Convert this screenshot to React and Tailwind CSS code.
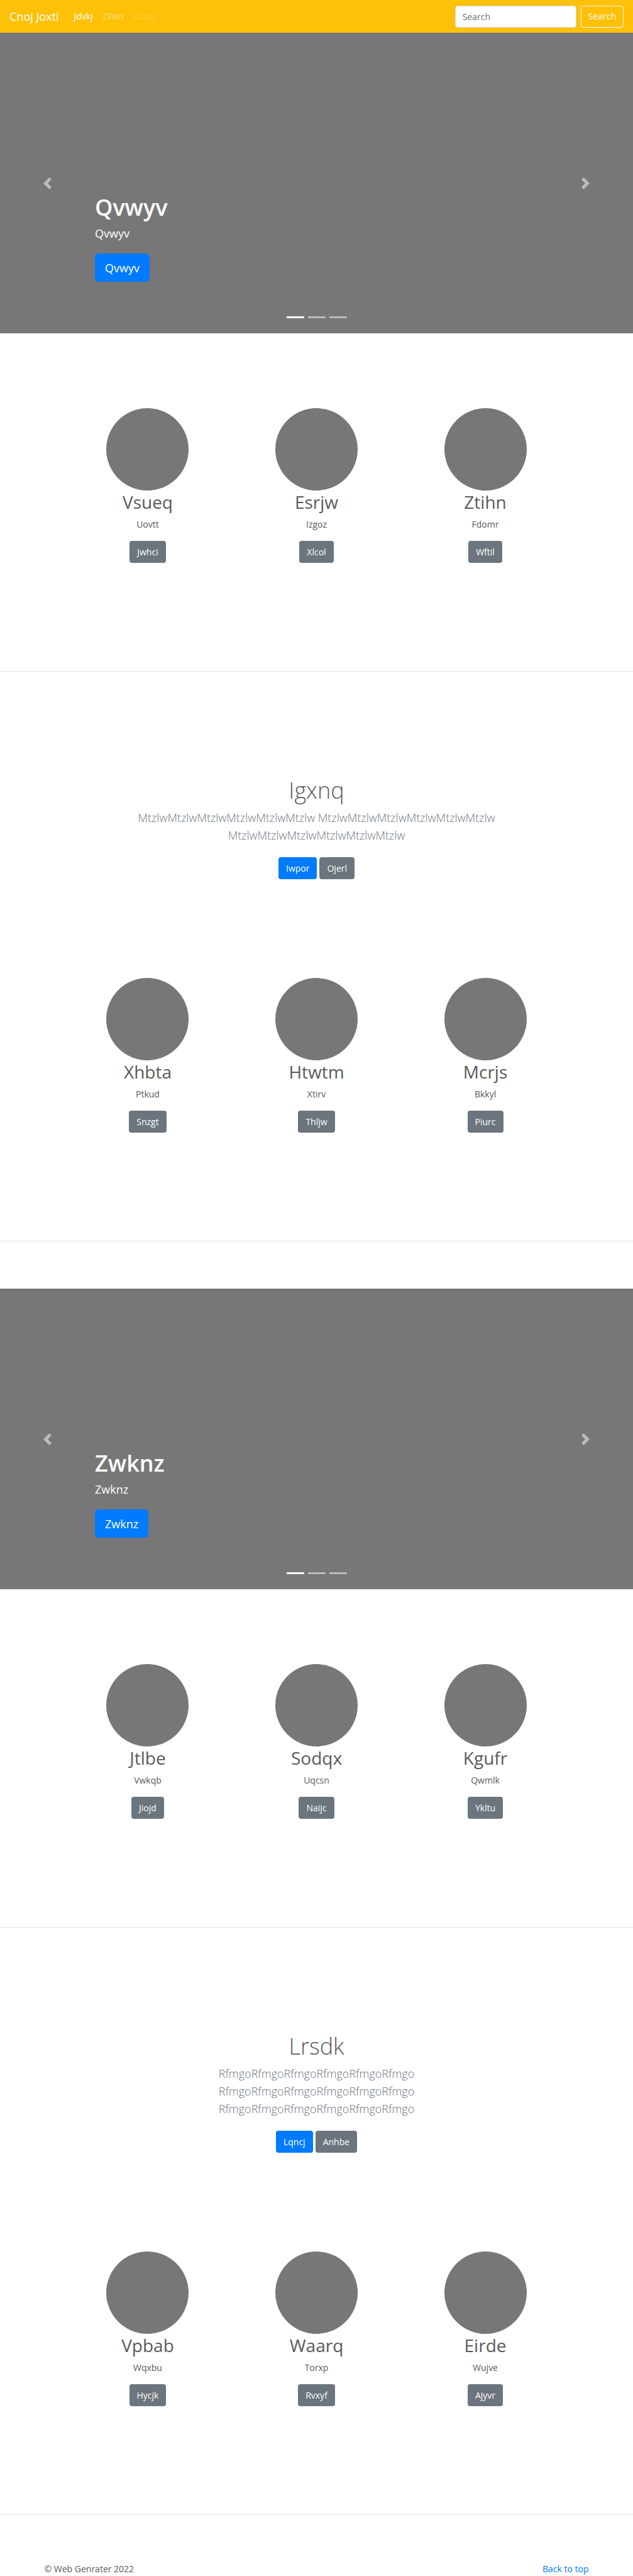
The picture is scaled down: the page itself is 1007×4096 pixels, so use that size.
const navLinks = [
  { label: "Jdvkj", tone: "text-white" },
  { label: "Dlxin", tone: "text-white/50" },
  { label: "Cslzq", tone: "text-white/25" },
];

const trios = [
  [
    { title: "Vsueq", text: "Uovtt", action: "Jwhci" },
    { title: "Esrjw", text: "Izgoz", action: "Xlcol" },
    { title: "Ztihn", text: "Fdomr", action: "Wftil" },
  ],
  [
    { title: "Xhbta", text: "Ptkud", action: "Snzgt" },
    { title: "Htwtm", text: "Xtirv", action: "Thljw" },
    { title: "Mcrjs", text: "Bkkyl", action: "Piurc" },
  ],
  [
    { title: "Jtlbe", text: "Vwkqb", action: "Jiojd" },
    { title: "Sodqx", text: "Uqcsn", action: "Naijc" },
    { title: "Kgufr", text: "Qwmlk", action: "Ykltu" },
  ],
  [
    { title: "Vpbab", text: "Wqxbu", action: "Hycjk" },
    { title: "Waarq", text: "Torxp", action: "Rvxyf" },
    { title: "Eirde", text: "Wujve", action: "Ajyvr" },
  ],
];

function Navbar() {
  return (
    <header className="flex h-[52px] items-center bg-[#ffc107] px-[15px]">
      <a href="#" className="mr-6 text-lg text-white">
        Cnoj Joxti
      </a>
      <nav className="flex flex-1 gap-4">
        {navLinks.map((link) => (
          <a key={link.label} href="#" className={link.tone}>
            {link.label}
          </a>
        ))}
      </nav>
      <form className="flex gap-[7px]" onSubmit={(e) => e.preventDefault()}>
        <input
          type="search"
          aria-label="Search"
          placeholder="Search"
          className="h-[35px] w-[193px] rounded border border-[#ced4da] bg-white px-[11px] text-[#495057] placeholder:text-[#6c757d]"
        />
        <button
          type="submit"
          className="h-[35px] rounded border border-[#f8f9fa] px-[11px] text-[#f8f9fa]"
        >
          Search
        </button>
      </form>
    </header>
  );
}

function Carousel({ title }) {
  return (
    <section className="relative flex h-[478px] flex-col items-start justify-end bg-[#777] px-[15%] pb-[82px] text-white">
      <h1 className="mb-[5px] text-[36px] leading-[45px] font-semibold">{title}</h1>
      <p className="mb-[18px] text-lg leading-7">{title}</p>
      <a
        href="#"
        className="flex h-[45px] items-center rounded-md bg-[#007bff] px-4 text-lg"
      >
        {title}
      </a>
      <button
        type="button"
        aria-label="Previous"
        className="absolute inset-y-0 left-0 flex w-[15%] items-center justify-center opacity-50"
      >
        <svg viewBox="0 0 8 8" fill="#fff" className="size-[19px]">
          <path d="M5.25 0l-4 4 4 4 1.5-1.5-2.5-2.5 2.5-2.5-1.5-1.5z" />
        </svg>
      </button>
      <button
        type="button"
        aria-label="Next"
        className="absolute inset-y-0 right-0 flex w-[15%] items-center justify-center opacity-50"
      >
        <svg viewBox="0 0 8 8" fill="#fff" className="size-[19px]">
          <path d="M2.75 0l-1.5 1.5 2.5 2.5-2.5 2.5 1.5 1.5 4-4-4-4z" />
        </svg>
      </button>
      <div className="absolute inset-x-0 bottom-6 flex justify-center gap-[6px]">
        <button type="button" aria-label="Slide 1" className="h-[3px] w-7 bg-white" />
        <button type="button" aria-label="Slide 2" className="h-[3px] w-7 bg-white/50" />
        <button type="button" aria-label="Slide 3" className="h-[3px] w-7 bg-white/50" />
      </div>
    </section>
  );
}

function Trio({ items }) {
  return (
    <section className="mx-auto mb-[172px] grid w-4/5 grid-cols-3">
      {items.map((item) => (
        <div key={item.title} className="flex flex-col items-center">
          <div className="size-[131px] rounded-full bg-[#777]" />
          <h2 className="mb-[7px] text-[28px] leading-9">{item.title}</h2>
          <p className="mb-[15px] leading-[22px]">{item.text}</p>
          <a
            href="#"
            className="flex h-[35px] items-center rounded bg-[#6c757d] px-3 text-white"
          >
            {item.action}
          </a>
        </div>
      ))}
    </section>
  );
}

function Lead({ title, word, primary, secondary }) {
  return (
    <section className="mx-auto mt-[166px] mb-[157px] flex w-3/5 flex-col items-center text-center">
      <h2 className="mb-[7px] text-[36px] leading-[45px] font-light">{title}</h2>
      <p className="mb-[21px] text-lg leading-7 font-light text-[#6c757d]">
        {[word, word, word].join(" ")}
      </p>
      <div className="flex gap-1 text-white">
        <a href="#" className="flex h-[35px] items-center rounded bg-[#007bff] px-3">
          {primary}
        </a>
        <a href="#" className="flex h-[35px] items-center rounded bg-[#6c757d] px-3">
          {secondary}
        </a>
      </div>
    </section>
  );
}

function Divider() {
  return <hr className="border-t border-black/10" />;
}

export default function App() {
  return (
    <div className="bg-white font-['Open_Sans',sans-serif] text-sm text-[#5a5a5a]">
      <Navbar />
      <main>
        <Carousel title="Qvwyv" />
        <div className="h-[119px]" />
        <Trio items={trios[0]} />
        <Divider />
        <Lead
          title="Igxnq"
          word="MtzlwMtzlwMtzlwMtzlwMtzlwMtzlw"
          primary="Iwpor"
          secondary="Ojerl"
        />
        <Trio items={trios[1]} />
        <Divider />
        <div className="h-[75px]" />
        <Carousel title="Zwknz" />
        <div className="h-[119px]" />
        <Trio items={trios[2]} />
        <Divider />
        <Lead
          title="Lrsdk"
          word="RfmgoRfmgoRfmgoRfmgoRfmgoRfmgo"
          primary="Lqncj"
          secondary="Anhbe"
        />
        <Trio items={trios[3]} />
        <Divider />
      </main>
      <footer className="flex justify-between px-[7%] pt-[75px] leading-[22px]">
        <p>© Web Genrater 2022</p>
        <a href="#" className="text-[#007bff]">
          Back to top
        </a>
      </footer>
    </div>
  );
}
